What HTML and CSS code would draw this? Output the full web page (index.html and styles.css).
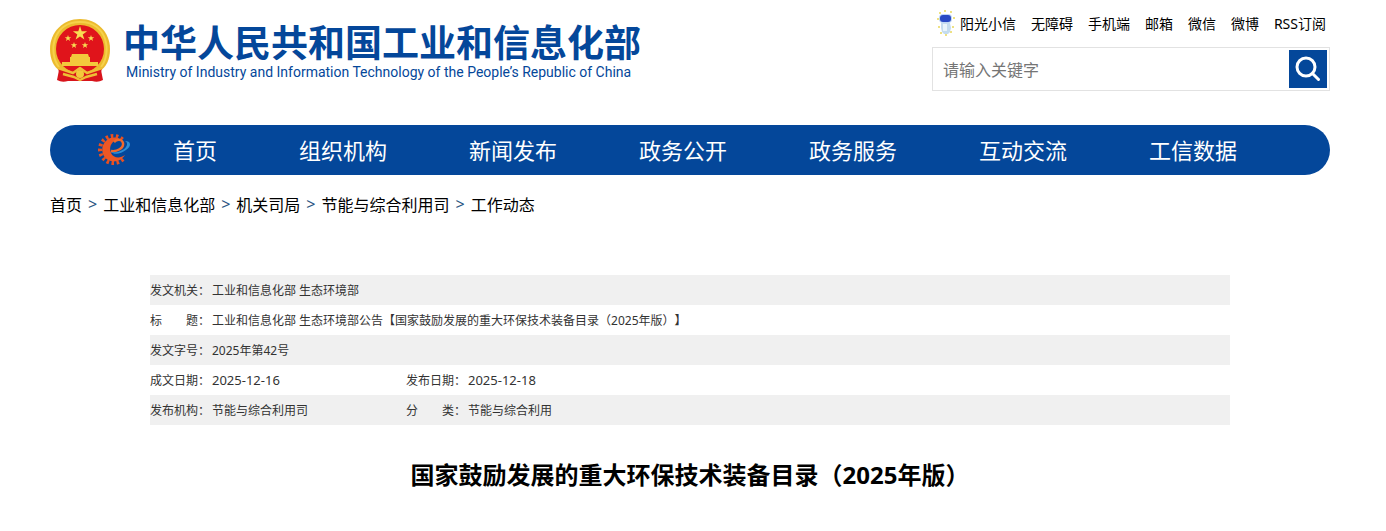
FILE: index.html
```html
<!DOCTYPE html>
<html lang="zh-CN">
<head>
    <meta charset="UTF-8">
    <meta name="viewport" content="width=device-width, initial-scale=1.0">
    <title>国家鼓励发展的重大环保技术装备目录（2025年版）</title>
    <link rel="stylesheet" href="styles.css">
</head>
<body>
    <header class="header">
        <a class="logo" href="#">
            <svg class="emblem" viewBox="0 0 60 64" aria-hidden="true">
                <path d="M10 46L7 61Q12 64 18 62L42 62Q48 64 53 61L50 46Z" fill="#d8141c"/>
                <path d="M30 0C47 0 60 13 60 30C60 41 56 48 50 52L10 52C4 48 0 41 0 30C0 13 13 0 30 0Z" fill="#ecbb2e"/>
                <path d="M9 48C-2 34 2 3 30 3C58 3 62 34 51 48" fill="none" stroke="#f6d24a" stroke-width="2"/>
                <circle cx="30" cy="30" r="24" fill="#e0141b"/>
                <path d="M30 7l1.700 5.200h5.400l-4.400 3.200 1.700 5.200-4.400-3.200-4.400 3.200 1.700-5.200-4.400-3.200h5.400z" fill="#f8dc52"/>
                <path id="s" d="M18 16l.8 2.300h2.400l-1.900 1.400.8 2.300-2.100-1.400-2 1.400.7-2.300-1.900-1.400h2.400z" fill="#f8dc52"/>
                <use href="#s" x="23"/>
                <use href="#s" x="6" y="7"/>
                <use href="#s" x="17" y="7"/>
                <path d="M22 35h16l1 3H21zM20 38h20v5H20zM12 43h36v4H12z" fill="#f3c93c"/>
                <path d="M8 49L24 53L30 49L36 53L52 49L50 57L36 61L30 57L24 61L10 57Z" fill="#d8141c"/>
                <path d="M8 49L23 54L30 49L37 54L52 49M13 55L24 58L30 61L36 58L47 55" fill="none" stroke="#eebf35" stroke-width="2.500" stroke-linejoin="round"/>
                <circle cx="30" cy="55" r="4" fill="#f3c93c"/>
            </svg>
            <span class="logo-text">
                <span class="logo-cn">中华人民共和国工业和信息化部</span>
                <span class="logo-en">Ministry of Industry and Information Technology of the People’s Republic of China</span>
            </span>
        </a>
        <div class="tools">
            <div class="top-links">
                <a class="robot-link" href="#">
                    <svg class="robot" viewBox="0 0 18 26" aria-hidden="true">
                        <g fill="#e8d75a">
                            <circle cx="3" cy="3" r="1"/><circle cx="8" cy="1" r="1"/><circle cx="14" cy="2" r="1"/>
                            <circle cx="1" cy="9" r="1"/><circle cx="17" cy="8" r="1"/><circle cx="2" cy="17" r="1"/>
                            <circle cx="16" cy="17" r="1"/><circle cx="4" cy="23" r="1"/><circle cx="9" cy="25" r="1"/><circle cx="14" cy="22" r="1"/>
                        </g>
                        <rect x="2" y="4" width="13" height="9" rx="4" fill="#bfd6f4"/>
                        <rect x="3" y="5" width="11" height="7" rx="3" fill="#2949c4"/>
                        <path d="M4 13h9l1 5-1 4-2 2H7l-2-2-1-4z" fill="#c4dcef"/>
                        <path d="M6 14h4v7H6z" fill="#e9f4fb"/>
                    </svg>
                    阳光小信
                </a>
                <a href="#">无障碍</a>
                <a href="#">手机端</a>
                <a href="#">邮箱</a>
                <a href="#">微信</a>
                <a href="#">微博</a>
                <a href="#">RSS订阅</a>
            </div>
            <form class="search">
                <input type="text" name="q" placeholder="请输入关键字" aria-label="请输入关键字">
                <button type="submit" aria-label="搜索">
                    <svg viewBox="0 0 38 38" aria-hidden="true">
                        <circle cx="17" cy="17" r="9" fill="none" stroke="#fff" stroke-width="3"/>
                        <path d="M23.500 23.500L29.500 29.500" stroke="#fff" stroke-width="3" stroke-linecap="round"/>
                    </svg>
                </button>
            </form>
        </div>
    </header>

    <nav class="nav">
        <svg class="gear" viewBox="0 0 34 32" aria-hidden="true">
            <path d="M24.500 6.500A13.500 13.500 0 1 0 26 25" fill="none" stroke="#e9501f" stroke-width="4" stroke-dasharray="2.500 2.500"/>
            <path d="M25 10C23 4 14 3 9 7C2 12 3 23 10 27C16 30 23 28 27 22C22 26 15 25 13 20C10 13 15 7 20 7C23 7 24 9 25 10Z" fill="#ee5724"/>
            <path d="M13 18C19 19 26 15 25 10C24 6 19 6 16 9" fill="none" stroke="#f06a2c" stroke-width="2.500"/>
            <path d="M27 8C33 8 34 13 28 17C23 21 16 22 13 19C19 20 25 18 28 14C30 11 29 9 27 8Z" fill="#2c8ed6"/>
        </svg>
        <a href="#">首页</a>
        <a href="#">组织机构</a>
        <a href="#">新闻发布</a>
        <a href="#">政务公开</a>
        <a href="#">政务服务</a>
        <a href="#">互动交流</a>
        <a href="#">工信数据</a>
    </nav>

    <div class="crumbs">
        <a href="#">首页</a>
        <span>&gt;</span>
        <a href="#">工业和信息化部</a>
        <span>&gt;</span>
        <a href="#">机关司局</a>
        <span>&gt;</span>
        <a href="#">节能与综合利用司</a>
        <span>&gt;</span>
        <a href="#">工作动态</a>
    </div>

    <main class="content">
        <table class="info">
            <tr>
                <th scope="row">发文机关：</th>
                <td colspan="3">工业和信息化部 生态环境部</td>
            </tr>
            <tr>
                <th scope="row">标　　题：</th>
                <td colspan="3">工业和信息化部 生态环境部公告【国家鼓励发展的重大环保技术装备目录（2025年版）】</td>
            </tr>
            <tr>
                <th scope="row">发文字号：</th>
                <td colspan="3">2025年第42号</td>
            </tr>
            <tr>
                <th scope="row">成文日期：</th>
                <td class="date">2025-12-16</td>
                <th scope="row">发布日期：</th>
                <td class="date">2025-12-18</td>
            </tr>
            <tr>
                <th scope="row">发布机构：</th>
                <td class="first">节能与综合利用司</td>
                <th scope="row">分　　类：</th>
                <td>节能与综合利用</td>
            </tr>
        </table>
        <h1>国家鼓励发展的重大环保技术装备目录（2025年版）</h1>
    </main>
</body>
</html>
```
FILE: styles.css
```css
* {
    box-sizing: border-box;
}

body {
    margin: 0;
    padding: 0 56px 0 50px;
    background: #fff;
    color: #000;
    font-family: "Noto Sans", "Noto Sans CJK SC", sans-serif;
    text-spacing-trim: space-all;
}

a {
    color: inherit;
    text-decoration: none;
}

.header {
    display: flex;
    justify-content: space-between;
    align-items: flex-start;
    height: 125px;
}

.logo {
    display: flex;
    gap: 13px;
    padding-top: 19px;
    color: #04479a;
}

.emblem {
    width: 60px;
    height: 64px;
}

.logo-text {
    display: flex;
    flex-direction: column;
    white-space: nowrap;
}

.logo-cn {
    font-family: "Noto Sans CJK SC", sans-serif;
    font-size: 37px;
    font-weight: bold;
    line-height: 44px;
}

.logo-en {
    padding-left: 3px;
    font-family: Roboto, sans-serif;
    font-size: 14px;
    line-height: 18px;
}

.tools {
    width: 398px;
    padding-top: 9px;
}

.top-links {
    display: flex;
    justify-content: flex-end;
    align-items: center;
    gap: 15px;
    height: 28px;
    padding-right: 4px;
    font-size: 14px;
    white-space: nowrap;
}

.robot-link {
    display: flex;
    align-items: center;
    gap: 5px;
}

.robot {
    width: 18px;
    height: 26px;
}

.search {
    display: flex;
    height: 44px;
    margin-top: 10px;
    padding: 2px;
    border: 1px solid #e2e2e2;
}

.search input {
    flex: 1;
    min-width: 0;
    padding: 2px 8px 0;
    border: none;
    outline: none;
    font-family: inherit;
    font-size: 16px;
}

.search input::placeholder {
    color: #757575;
}

.search button {
    width: 38px;
    height: 38px;
    padding: 0;
    border: none;
    background: #04479a;
    cursor: pointer;
}

.search svg {
    display: block;
}

.nav {
    display: flex;
    align-items: center;
    gap: 82px;
    height: 50px;
    padding: 0 0 2px 48px;
    border-radius: 25px;
    background: #04479a;
    color: #fff;
    font-size: 22px;
    white-space: nowrap;
}

.gear {
    width: 34px;
    height: 32px;
    margin-right: -41px;
}

.crumbs {
    display: flex;
    align-items: center;
    gap: 6px;
    height: 60px;
    padding-bottom: 2px;
    font-size: 16px;
}

.crumbs span {
    color: #2c5784;
}

.content {
    padding: 40px 100px 0;
}

.info {
    width: 100%;
    border-collapse: collapse;
    color: #333;
    font-size: 12px;
    line-height: 18px;
}

.info tr {
    height: 30px;
}

.info tr:nth-child(odd) {
    background: #f0f0f0;
}

.info th,
.info td {
    padding: 2px 0 0;
    font-weight: normal;
    text-align: left;
}

.info th {
    width: 62px;
}

.info .first {
    width: 194px;
}

.info .date {
    padding-top: 0;
    font-size: 13px;
}

h1 {
    margin: 32px 0;
    font-size: 24px;
    line-height: 36px;
    text-align: center;
}
```
